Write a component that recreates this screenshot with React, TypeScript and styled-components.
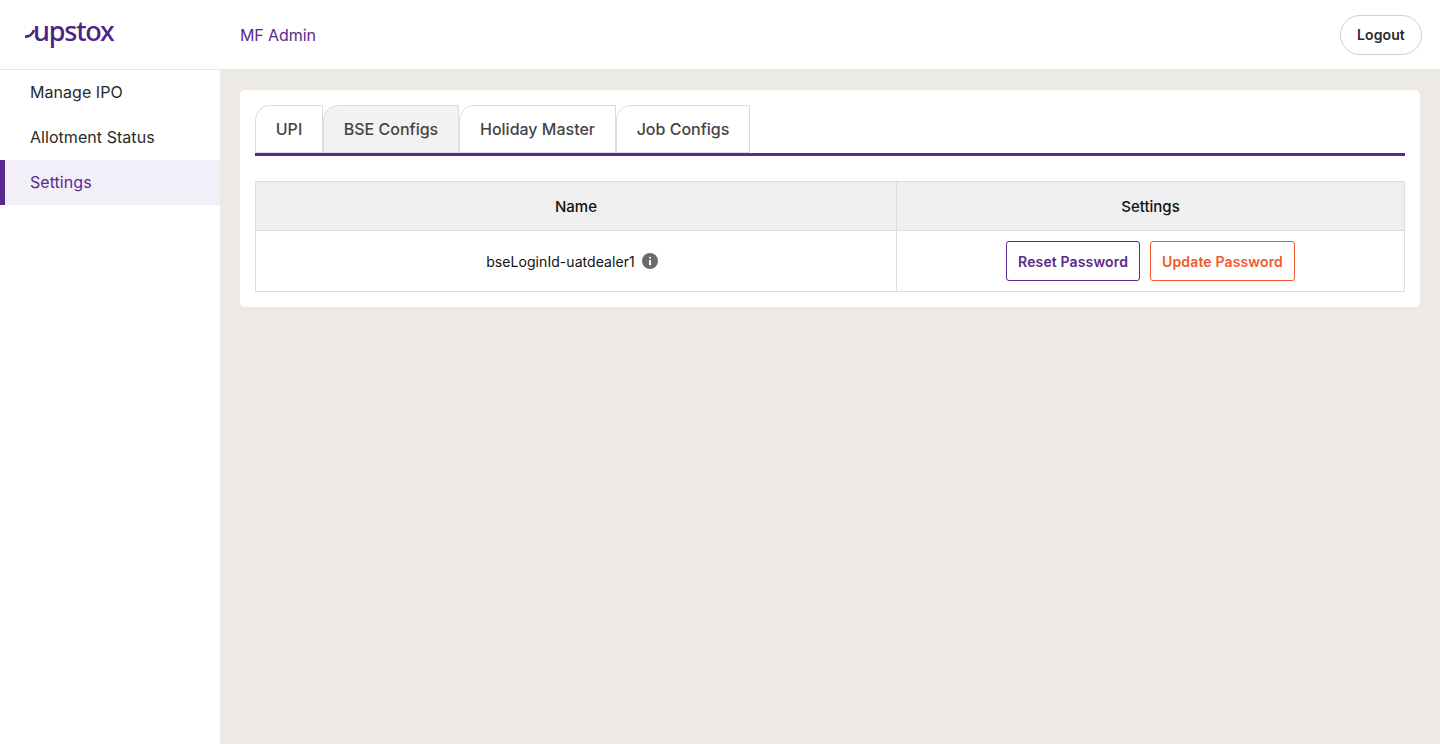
import React from 'react';
import styled, { createGlobalStyle } from 'styled-components';

const GlobalStyle = createGlobalStyle`
  html, body {
    margin: 0;
    padding: 0;
    height: 100%;
    background: #fff;
    font-family: Inter, "Liberation Sans", sans-serif;
  }
  * {
    box-sizing: border-box;
  }
`;

const Page = styled.div`
  display: flex;
  flex-direction: column;
  height: 744px;
  overflow: hidden;
`;

const Header = styled.header`
  display: flex;
  align-items: center;
  flex: 0 0 70px;
  height: 70px;
  padding-right: 18px;
  background: #fff;
  border-bottom: 1px solid #e8e8e8;
`;

const LogoSlot = styled.div`
  display: flex;
  align-items: center;
  width: 240px;
  padding-left: 25px;
  margin-top: -8px;
`;

const LogoText = styled.span`
  font-family: "Noto Sans", sans-serif;
  font-size: 27px;
  font-weight: 500;
  line-height: 30px;
  letter-spacing: -1.2px;
  color: #4b2484;
  margin-left: -4px;
`;

const AppTitle = styled.div`
  flex: 1;
  font-size: 16px;
  letter-spacing: -0.1px;
  color: #5a298b;
`;

const LogoutButton = styled.button`
  width: 82px;
  height: 40px;
  border: 1px solid #cfcfcf;
  border-radius: 20px;
  background: #fff;
  font-family: inherit;
  font-size: 14px;
  font-weight: 600;
  letter-spacing: 0.1px;
  color: #2a2a2a;
`;

const Body = styled.div`
  display: flex;
  flex: 1;
`;

const Sidebar = styled.nav`
  display: flex;
  flex-direction: column;
  flex: 0 0 220px;
  background: #fff;
`;

const NavItem = styled.div<{ $active?: boolean }>`
  display: flex;
  align-items: center;
  height: 45px;
  padding-left: ${(p) => (p.$active ? '25px' : '30px')};
  padding-bottom: 2px;
  font-size: 16px;
  letter-spacing: 0.05px;
  color: ${(p) => (p.$active ? '#5a298b' : '#2a2a2a')};
  background: ${(p) => (p.$active ? '#f2eff8' : 'transparent')};
  border-left: ${(p) => (p.$active ? '5px solid #5a298b' : 'none')};
`;

const Main = styled.main`
  flex: 1;
  padding: 20px;
  background: #edeae5;
`;

const Card = styled.section`
  padding: 15px;
  background: #fff;
  border-radius: 5px;
`;

const TabBar = styled.div`
  display: flex;
  height: 51px;
  border-bottom: 3px solid #5a298b;
`;

const Tab = styled.div<{ $selected?: boolean; $width: number }>`
  display: flex;
  align-items: center;
  justify-content: center;
  width: ${(p) => p.$width}px;
  height: 48px;
  font-size: 16px;
  font-weight: 500;
  color: #444;
  background: ${(p) => (p.$selected ? '#f2f2f2' : '#fff')};
  border: 1px solid #dcdcdc;
  border-radius: 15px 0 0 0;
`;

const Table = styled.div`
  display: grid;
  grid-template-columns: 641px 1fr;
  grid-template-rows: 49px 60px;
  margin-top: 25px;
  border: 1px solid #dcdcdc;
`;

const HeadCell = styled.div`
  display: flex;
  align-items: center;
  justify-content: center;
  background: #efefef;
  border-bottom: 1px solid #dcdcdc;
  font-size: 15px;
  font-weight: 500;
  color: #111;

  &:first-child {
    border-right: 1px solid #dcdcdc;
  }
`;

const Cell = styled.div<{ $divider?: boolean }>`
  display: flex;
  align-items: center;
  justify-content: center;
  gap: 10px;
  font-size: 14px;
  color: #111;
  border-right: ${(p) => (p.$divider ? '1px solid #dcdcdc' : 'none')};
`;

const NameWrap = styled.span`
  display: flex;
  align-items: center;
  gap: 7px;
  margin-right: 8px;
  letter-spacing: 0.06px;

  svg {
    margin-top: -1px;
  }
`;

const ActionButton = styled.button<{ $tone: string }>`
  height: 40px;
  padding: 0 11px;
  background: #fff;
  border: 1px solid ${(p) => p.$tone};
  border-radius: 3px;
  font-family: inherit;
  font-size: 14px;
  font-weight: 600;
  letter-spacing: 0.14px;
  color: ${(p) => p.$tone};
`;

const Swoosh = () => (
  <svg width="12" height="12" viewBox="0 0 12 12" fill="none" style={{ marginTop: 8 }}>
    <path d="M0.8 7.6 C3.5 7.6 6.5 6.4 8.6 2" stroke="#4b2484" strokeWidth="2.6" strokeLinecap="round" />
  </svg>
);

const InfoIcon = () => (
  <svg width="16" height="16" viewBox="0 0 16 16">
    <circle cx="8" cy="8" r="8" fill="#6b6b6b" />
    <rect x="7" y="7" width="2" height="5.2" fill="#fff" />
    <rect x="7" y="3.8" width="2" height="2" rx="1" fill="#fff" />
  </svg>
);

const tabs = [
  { label: 'UPI', width: 68 },
  { label: 'BSE Configs', width: 136 },
  { label: 'Holiday Master', width: 157 },
  { label: 'Job Configs', width: 134 },
];

export default function App() {
  return (
    <Page>
      <GlobalStyle />
      <Header>
        <LogoSlot>
          <Swoosh />
          <LogoText>upstox</LogoText>
        </LogoSlot>
        <AppTitle>MF Admin</AppTitle>
        <LogoutButton>Logout</LogoutButton>
      </Header>
      <Body>
        <Sidebar>
          <NavItem>Manage IPO</NavItem>
          <NavItem>Allotment Status</NavItem>
          <NavItem $active>Settings</NavItem>
        </Sidebar>
        <Main>
          <Card>
            <TabBar>
              {tabs.map((t) => (
                <Tab key={t.label} $width={t.width} $selected={t.label === 'BSE Configs'}>
                  {t.label}
                </Tab>
              ))}
            </TabBar>
            <Table>
              <HeadCell>Name</HeadCell>
              <HeadCell>Settings</HeadCell>
              <Cell $divider>
                <NameWrap>
                  bseLoginId-uatdealer1
                  <InfoIcon />
                </NameWrap>
              </Cell>
              <Cell>
                <ActionButton $tone="#5a298b">Reset Password</ActionButton>
                <ActionButton $tone="#f4582c">Update Password</ActionButton>
              </Cell>
            </Table>
          </Card>
        </Main>
      </Body>
    </Page>
  );
}
